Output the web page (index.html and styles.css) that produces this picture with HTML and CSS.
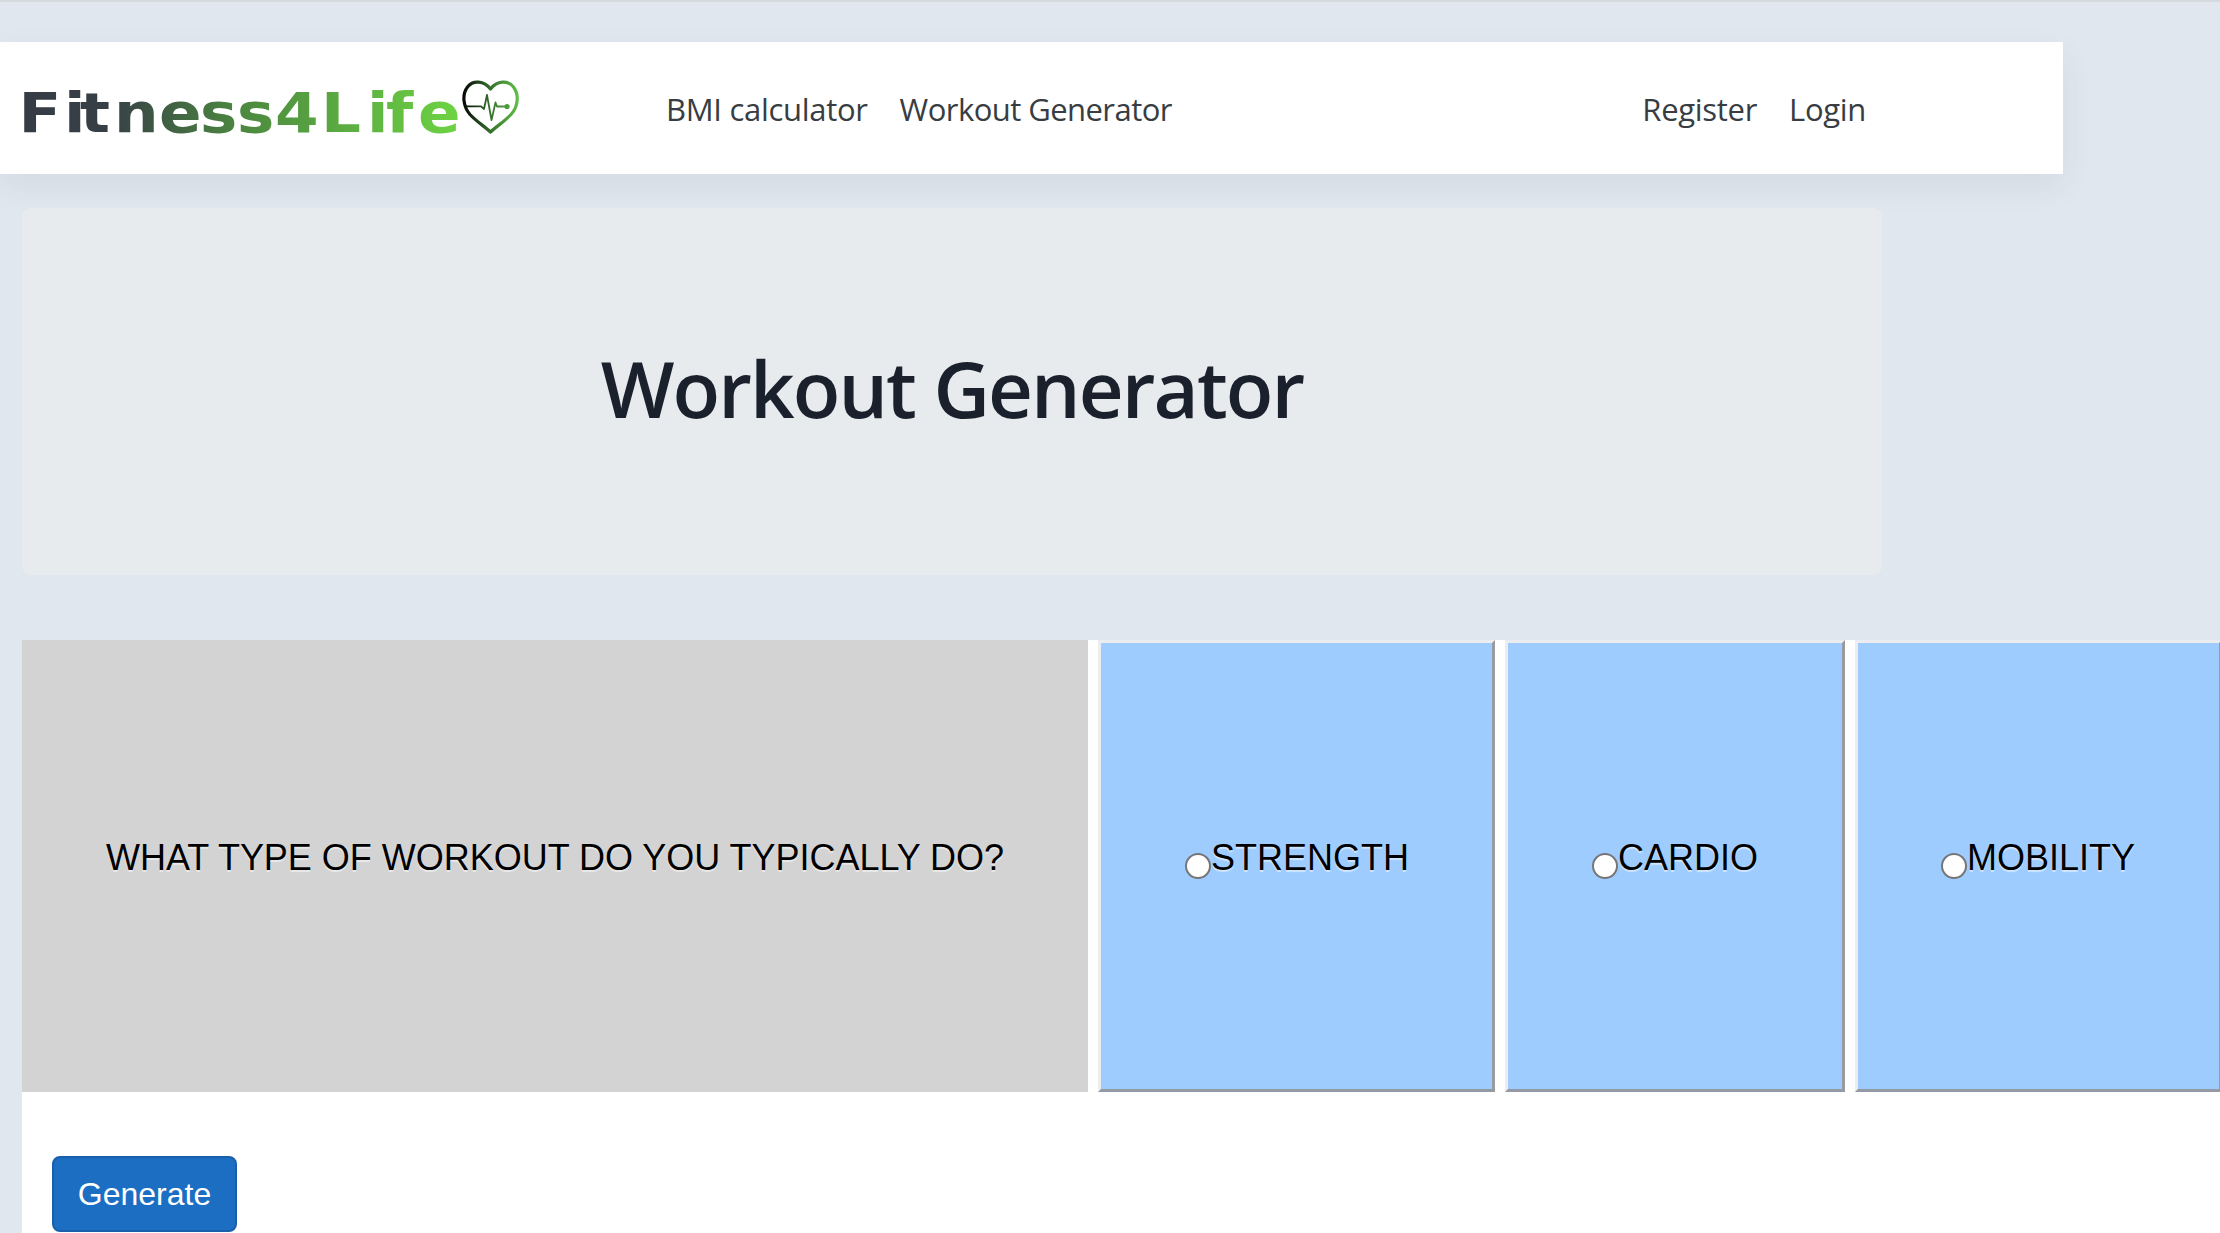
FILE: index.html
```html
<!DOCTYPE html>
<html lang="en">
<head>
<meta charset="utf-8">
<title>Workout Generator</title>
<link rel="stylesheet" href="styles.css">
</head>
<body>
<nav class="navbar">
  <a class="brand">
    <svg class="logo" width="520" height="92" viewBox="0 62 520 92">
      <defs>
        <linearGradient id="word" gradientUnits="userSpaceOnUse" x1="21" y1="0" x2="408" y2="0">
          <stop offset="0" stop-color="#353c46"/>
          <stop offset=".2" stop-color="#373f46"/>
          <stop offset=".5" stop-color="#4c8840"/>
          <stop offset="1" stop-color="#6dd343"/>
        </linearGradient>
        <linearGradient id="heart" gradientUnits="userSpaceOnUse" x1="463" y1="0" x2="518" y2="0">
          <stop offset="0" stop-color="#050805"/>
          <stop offset=".5" stop-color="#36712d"/>
          <stop offset="1" stop-color="#60bf48"/>
        </linearGradient>
      </defs>
      <text class="wordmark" transform="scale(1.12 1)" fill="url(#word)" y="132.500" x="16.500 57.100 71.500 101.800 142 178.600 211.600 245.500 286.600 327.700 344.600 373.200">Fitness4Life</text>
      <g fill="none" stroke="url(#heart)" stroke-linejoin="round">
        <path stroke-width="3.2" d="M490.500 89C484 80.500 473 80 467.500 87C461.500 95 463.500 107 470 114.500C476 121 484 126 490.500 132C497 126 505 121 511 114.500C518 107 519.500 95 513.500 87C508 80 497 80.500 490.500 89Z"/>
        <path stroke-width="1.8" d="M465 106.400H481L484 109L487 95L491.500 120L495.500 102.500L497 106.500H506"/>
      </g>
      <circle cx="507" cy="106.500" r="2.600" fill="#4b9b3d"/>
    </svg>
  </a>
  <div class="links">
    <a>BMI calculator</a>
    <a class="wide">Workout Generator</a>
  </div>
  <div class="links account">
    <a>Register</a>
    <a>Login</a>
  </div>
</nav>
<header class="hero">
  <h1>Workout Generator</h1>
</header>
<form class="generator">
  <div class="choices">
    <div class="question">WHAT TYPE OF WORKOUT DO YOU TYPICALLY DO?</div>
    <label class="choice strength"><input type="radio" name="type">STRENGTH</label>
    <label class="choice cardio"><input type="radio" name="type">CARDIO</label>
    <label class="choice mobility"><input type="radio" name="type">MOBILITY</label>
  </div>
  <button class="generate" type="button">Generate</button>
</form>
</body>
</html>
```
FILE: styles.css
```css
* {
  box-sizing: border-box;
}

body {
  margin: 0;
  height: 1233px;
  overflow: hidden;
  border-top: 2px solid #d3d9dd;
  background: #e0e7ef;
  display: flex;
  flex-direction: column;
}

.navbar {
  flex: none;
  display: flex;
  align-items: center;
  width: 2063px;
  height: 132px;
  margin-top: 40px;
  padding-right: 197px;
  background: #fff;
  box-shadow: 0 12px 30px rgba(60, 50, 70, .07);
}

.brand {
  width: 666px;
}

.logo {
  display: block;
}

.wordmark {
  font: bold 56px "DejaVu Sans", sans-serif;
}

.links {
  display: flex;
  gap: 32px;
  padding-top: 2px;
  color: #373d42;
  font: 31px/42px "Open Sans", sans-serif;
  letter-spacing: -.3px;
}

.wide {
  letter-spacing: -.55px;
}

.account {
  margin-left: auto;
}

.hero {
  flex: none;
  display: flex;
  align-items: center;
  justify-content: center;
  width: 1860px;
  height: 367px;
  margin: 34px 0 65px 22px;
  padding-bottom: 7px;
  border-radius: 9px;
  background: #e8ebee;
}

.hero h1 {
  margin: 0;
  color: #1a202c;
  font: 600 78px/92px "Open Sans", sans-serif;
  letter-spacing: -1.9px;
}

.generator {
  flex: none;
  width: 2200px;
  height: 593px;
  margin-left: 22px;
  background: #fff;
}

.choices {
  display: flex;
  gap: 10px;
  height: 452px;
  color: #000;
  font: 36px/54px "Liberation Sans", Arial, sans-serif;
  text-shadow: 0 2px 1px rgba(255, 255, 255, .5);
}

.question,
.choice {
  flex: none;
  display: flex;
  align-items: center;
}

.question {
  width: 1066px;
  padding: 0 0 16px 84px;
  background: #d3d3d3;
  letter-spacing: -.02px;
}

.choice {
  padding: 0 0 16px 84px;
  border: 3px solid;
  border-color: #ebedf0 #989ba0 #949aa3 #ebedf0;
  background: #9fccff;
}

.strength {
  width: 397px;
}

.cardio {
  width: 340px;
}

.mobility {
  width: 367px;
  padding-left: 83px;
}

.choice input {
  appearance: none;
  width: 26px;
  height: 26px;
  margin: 16px 0 0;
  border: 2px solid #767676;
  border-radius: 50%;
  background: #fff;
}

.generate {
  display: block;
  width: 185px;
  height: 76px;
  margin: 64px 0 0 30px;
  padding: 0;
  border: 2px solid #1a5fab;
  border-radius: 8px;
  background: #1c6ec3;
  color: #fff;
  font: 32px/48px "Liberation Sans", Arial, sans-serif;
}
```
